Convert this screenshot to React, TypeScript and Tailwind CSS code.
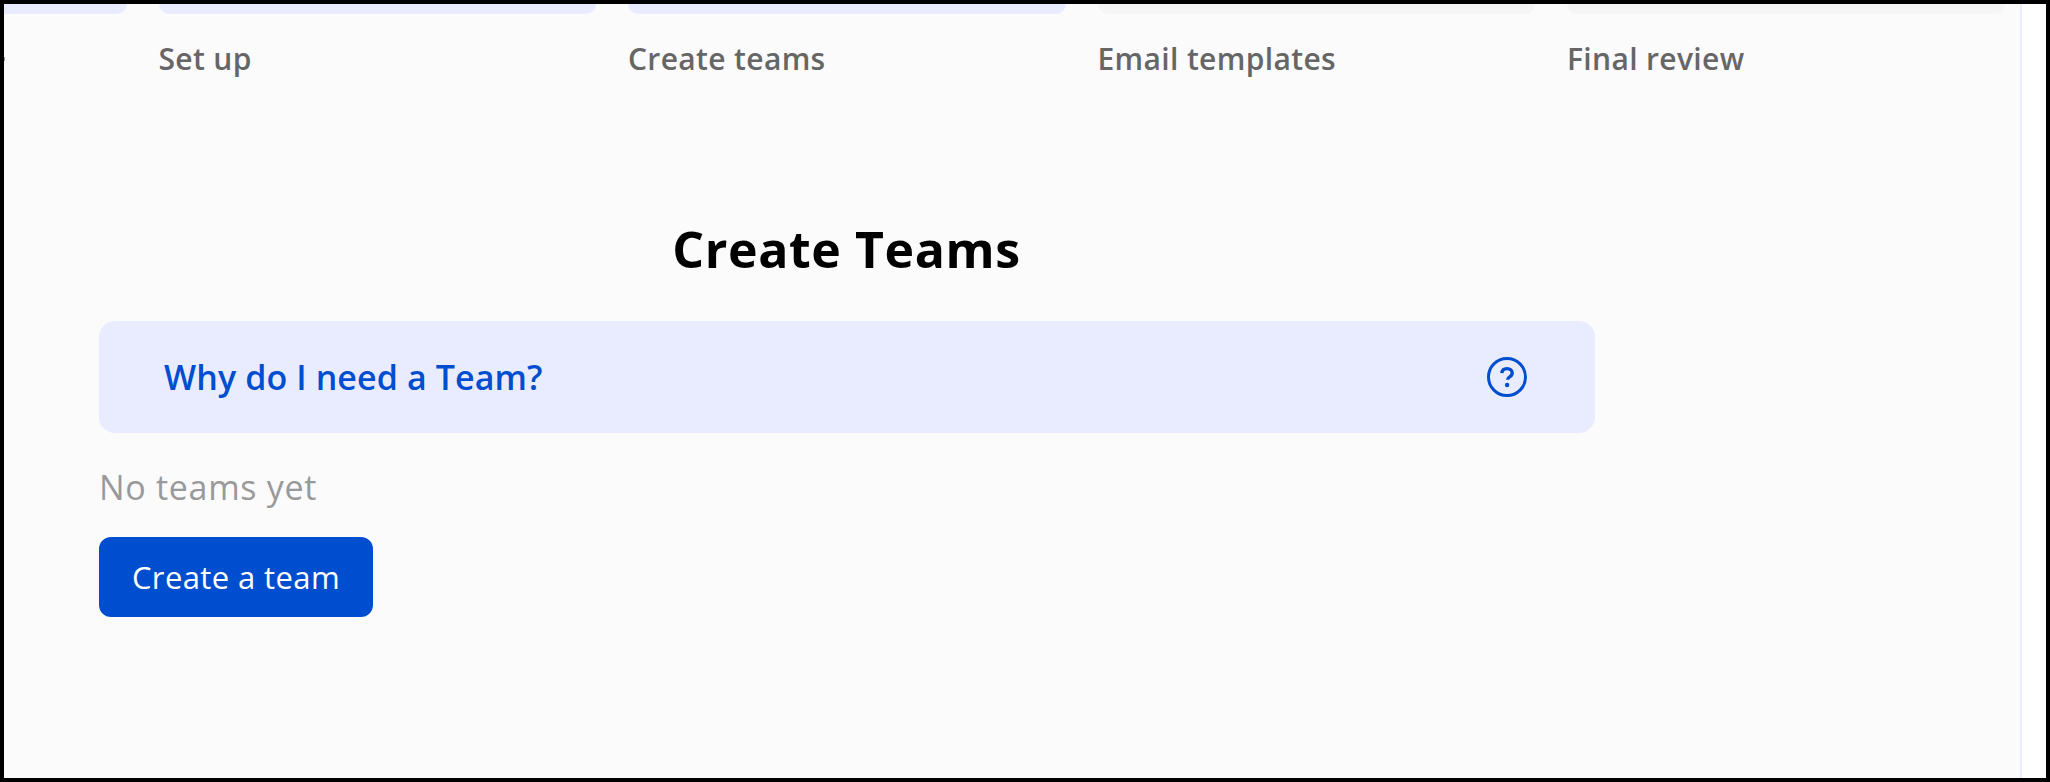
const font = "font-['Open_Sans','Noto_Sans',sans-serif]";

const steps = [
  { label: "", active: true },
  { label: "Set up", active: true },
  { label: "Create teams", active: true },
  { label: "Email templates", active: false },
  { label: "Final review", active: false },
];

function HelpIcon() {
  return (
    <svg width="40" height="40" viewBox="0 0 40 40" fill="none" className="shrink-0">
      <circle cx="20" cy="20" r="18.5" stroke="#004ed0" strokeWidth="3" />
      <path d="M14.8 16.2c.2-2.9 2.3-4.6 5.2-4.6 3 0 5.2 1.7 5.2 4.3 0 2-1.1 3-2.6 4-1.3.8-1.9 1.4-1.9 2.9" stroke="#004ed0" strokeWidth="3.4" strokeLinecap="butt" />
      <circle cx="20.1" cy="28" r="2.2" fill="#004ed0" />
    </svg>
  );
}

export default function App() {
  return (
    <div className={`${font} flex h-[782px] w-[2050px] overflow-hidden border-4 border-black bg-white`}>
      <main className="h-full w-[2018px] shrink-0 overflow-hidden border-r-2 border-[#e9ecff] bg-[#fbfbfc]">
        <div className="ml-[-315px] flex gap-8">
          {steps.map((s, i) => (
            <div key={i} className="w-[437.5px] shrink-0">
              <div className={`h-[10px] rounded-b-2xl ${s.active ? "bg-[#e9ecff]" : "bg-[#f5f5f5]"}`} />
              <div className="mt-[27px] flex h-[36px] items-center text-[30px] leading-[36px] font-semibold tracking-[0.35px] whitespace-nowrap text-[#666666]">
                {s.label || <span className="ml-[315px] h-[4px] w-[1px] bg-[#999999]" />}
              </div>
            </div>
          ))}
        </div>
        <div className="ml-[95px] w-[1496px]">
          <h1 className="mt-[140px] h-[64px] pr-[1px] text-center text-[50px] leading-[64px] font-bold tracking-[0.6px] text-black">Create Teams</h1>
          <div className="mt-[40px] flex h-[112px] items-center justify-between rounded-2xl bg-[#e9ecff] pr-[68px] pl-[65px]">
            <span className="text-[34px] font-semibold tracking-[0.1px] text-[#004ed0]">Why do I need a Team?</span>
            <HelpIcon />
          </div>
          <p className="mt-[32px] h-[44px] text-[34px] leading-[44px] tracking-[0.7px] text-[#999999]">No teams yet</p>
          <button className="mt-[28px] flex h-[80px] w-[274px] items-center justify-center rounded-xl bg-[#004ed0] text-[31px] font-normal tracking-[0.4px] text-white">
            Create a team
          </button>
        </div>
      </main>
    </div>
  );
}
